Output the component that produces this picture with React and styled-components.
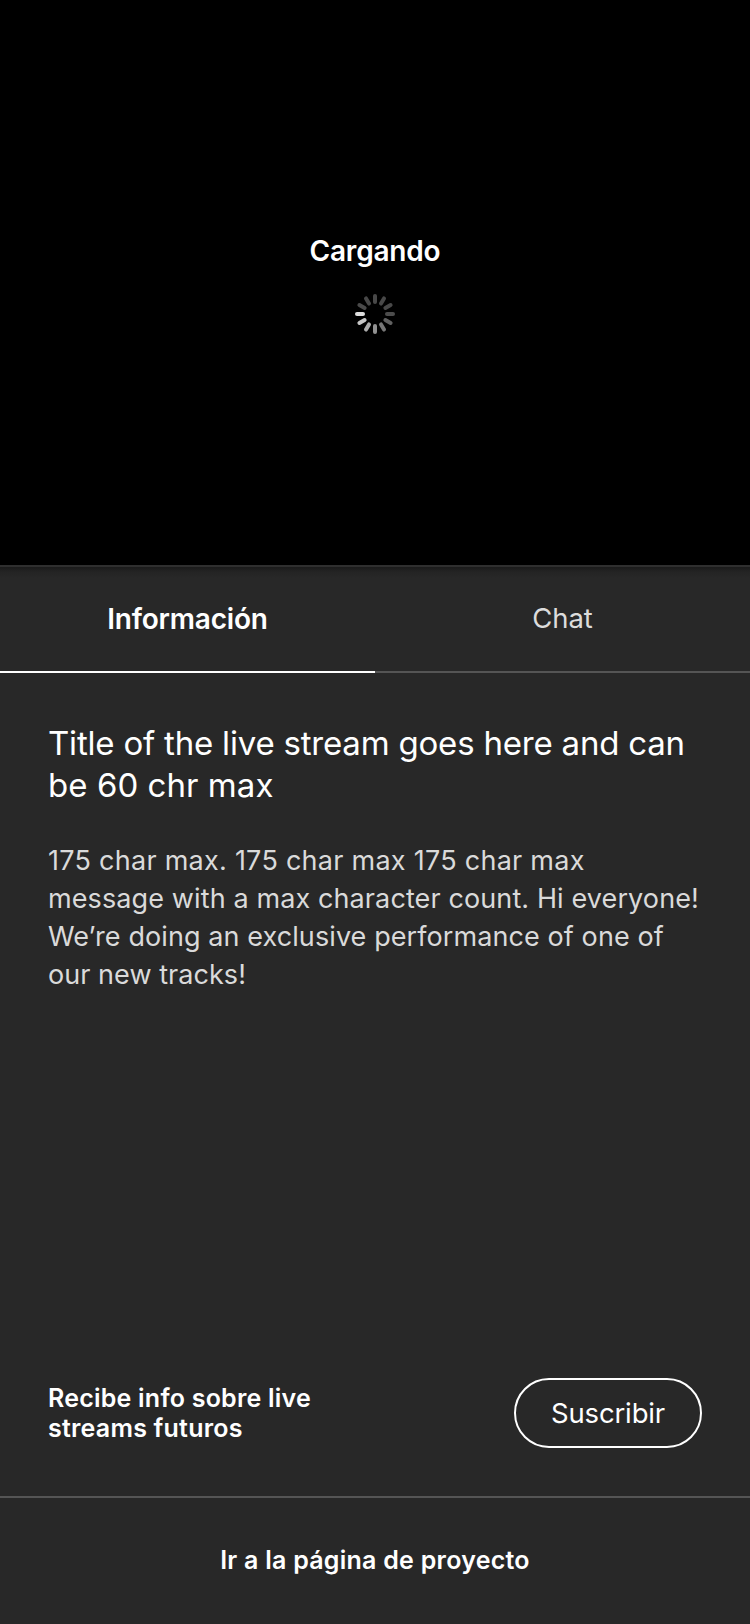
import React from 'react';
import styled, { createGlobalStyle } from 'styled-components';

const GlobalStyle = createGlobalStyle`
  * { box-sizing: border-box; }
  body {
    margin: 0;
    background: #282828;
    color: #fff;
    font-family: Inter, "Liberation Sans", sans-serif;
  }
  button { font-family: inherit; }
`;

const Screen = styled.div`
  display: flex;
  flex-direction: column;
  height: 1624px;
  background: #282828;
`;

const Player = styled.section`
  flex: none;
  display: flex;
  flex-direction: column;
  align-items: center;
  gap: 26px;
  height: 565px;
  padding-top: 234px;
  background: #000;
`;

const LoadingLabel = styled.div`
  font-size: 28px;
  line-height: 34px;
  font-weight: 600;
  letter-spacing: -0.2px;
`;

const SpinnerSvg = styled.svg`
  display: block;
  width: 40px;
  height: 40px;
`;

const Tabs = styled.nav`
  flex: none;
  display: flex;
  height: 108px;
  border-top: 2px solid #2f2f2f;
  background: linear-gradient(#1b1b1b, #242424 5px, #282828 11px);
`;

const Tab = styled.button`
  flex: 1;
  border: 0;
  border-bottom: 2px solid ${(p) => (p.$active ? '#fff' : '#555')};
  padding: 0 0 ${(p) => (p.$active ? 0 : 2)}px;
  background: none;
  color: ${(p) => (p.$active ? '#fff' : '#dcdcdc')};
  font-size: ${(p) => (p.$active ? 28 : 27.5)}px;
  font-weight: ${(p) => (p.$active ? 600 : 400)};
  letter-spacing: ${(p) => (p.$active ? -0.18 : -0.1)}px;
`;

const Content = styled.main`
  flex: 1;
  padding: 49px 48px 0;
`;

const Title = styled.h1`
  margin: 0 0 36px;
  font-size: 33px;
  line-height: 42px;
  font-weight: 400;
  white-space: nowrap;
`;

const Description = styled.p`
  margin: 0;
  color: #dadada;
  font-size: 27px;
  line-height: 38px;
  white-space: nowrap;
`;

const TextLine = styled.span`
  display: block;
  letter-spacing: ${(p) => p.$tracking}px;
`;

const Subscribe = styled.section`
  flex: none;
  display: flex;
  align-items: center;
  justify-content: space-between;
  padding: 0 48px 48px;
`;

const Prompt = styled.p`
  margin: 0;
  width: 290px;
  font-size: 25px;
  line-height: 30px;
  font-weight: 600;
  letter-spacing: 0.22px;
`;

const SubscribeButton = styled.button`
  width: 188px;
  height: 70px;
  padding: 0;
  border: 2px solid #fff;
  border-radius: 35px;
  background: none;
  color: #fff;
  font-size: 27.5px;
  letter-spacing: -0.15px;
`;

const ProjectLink = styled.button`
  flex: none;
  height: 128px;
  padding: 0 0 2px;
  border: 0;
  border-top: 2px solid #555;
  background: none;
  color: #fff;
  font-size: 25px;
  font-weight: 600;
  letter-spacing: 0.25px;
`;

const spokes = [
  '#484848', '#484848', '#484848', '#4c4c4c', '#606060', '#777777',
  '#919191', '#acacac', '#c6c6c6', '#dedede', '#4a4a4a', '#484848',
];

function Spinner() {
  return (
    <SpinnerSvg viewBox="0 0 40 40" aria-hidden="true">
      {spokes.map((color, i) => (
        <rect
          key={i}
          x="18"
          y="0"
          width="4"
          height="10"
          rx="2"
          fill={color}
          transform={`rotate(${i * 30} 20 20)`}
        />
      ))}
    </SpinnerSvg>
  );
}

const title = [
  { text: 'Title of the live stream goes here and can', tracking: -0.2 },
  { text: 'be 60 chr max', tracking: 0.05 },
];

const description = [
  { text: '175 char max. 175 char max 175 char max', tracking: 0.26 },
  { text: 'message with a max character count. Hi everyone!', tracking: 0.11 },
  { text: 'We’re doing an exclusive performance of one of', tracking: 0.09 },
  { text: 'our new tracks!', tracking: 0.05 },
];

export default function App() {
  return (
    <Screen>
      <GlobalStyle />
      <Player>
        <LoadingLabel>Cargando</LoadingLabel>
        <Spinner />
      </Player>
      <Tabs>
        <Tab $active>Información</Tab>
        <Tab>Chat</Tab>
      </Tabs>
      <Content>
        <Title>
          {title.map((line) => (
            <TextLine key={line.text} $tracking={line.tracking}>
              {line.text}
            </TextLine>
          ))}
        </Title>
        <Description>
          {description.map((line) => (
            <TextLine key={line.text} $tracking={line.tracking}>
              {line.text}
            </TextLine>
          ))}
        </Description>
      </Content>
      <Subscribe>
        <Prompt>
          Recibe info sobre live
          <br />
          streams futuros
        </Prompt>
        <SubscribeButton>Suscribir</SubscribeButton>
      </Subscribe>
      <ProjectLink>Ir a la página de proyecto</ProjectLink>
    </Screen>
  );
}
